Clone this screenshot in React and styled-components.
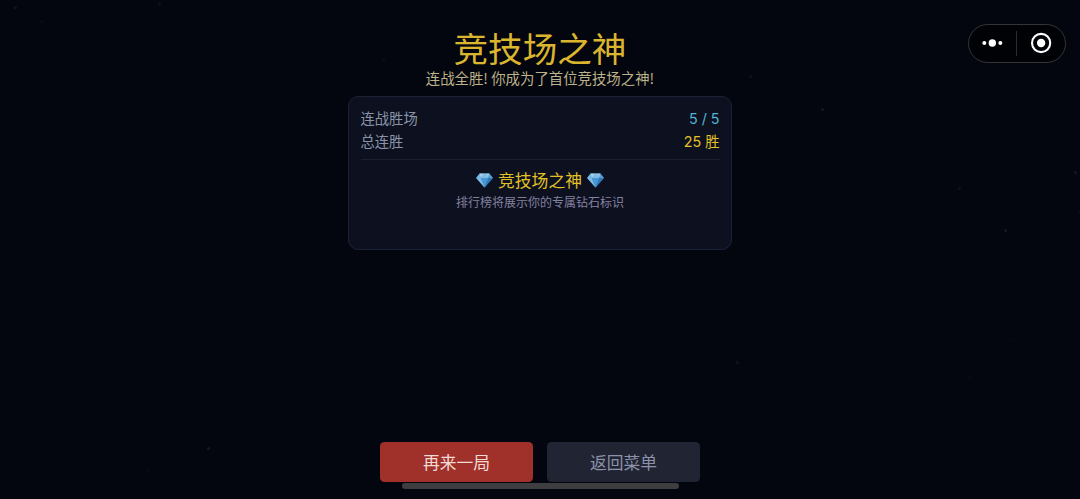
import styled, { createGlobalStyle } from "styled-components";

const GlobalStyle = createGlobalStyle`
  body {
    margin: 0;
    background-color: #03060e;
  }
  * {
    box-sizing: border-box;
  }
`;

const Container = styled.div`
  position: relative;
  width: 100vw;
  height: 499px;
  overflow: hidden;

  display: flex;
  flex-direction: column;
  align-items: center;

  background-color: #03060e;
  font-family: "Noto Sans CJK SC", sans-serif;
`;

const Star = styled.i`
  position: absolute;
  left: ${(props) => props.$x}px;
  top: ${(props) => props.$y}px;
  width: 3px;
  height: 3px;
  border-radius: 50%;
  background-color: #ffffff;
  opacity: ${(props) => props.$opacity};
`;

const Title = styled.h1`
  margin: 27px 0 0;
  height: 41px;
  line-height: 41px;

  font-size: 34.6px;
  font-weight: 400;
  color: #dcb52f;
`;

const Subtitle = styled.div`
  height: 20px;
  line-height: 20px;

  font-size: 14.4px;
  color: #bdb28a;
  white-space: nowrap;
`;

const Card = styled.div`
  width: 384px;
  height: 154px;
  margin-top: 8px;
  padding: 9px 11.5px;

  border: 1px solid #1b2137;
  border-radius: 10px;
  background-color: #0d101e;
`;

const Row = styled.div`
  height: 23px;

  display: flex;
  justify-content: space-between;
  align-items: center;

  font-size: 14.3px;
  line-height: 23px;
`;

const Label = styled.span`
  color: #8a94a9;
`;

const Value = styled.span`
  padding-top: 2px;
  color: ${(props) => props.$color};
  font-family: Inter, "Noto Sans CJK SC", sans-serif;
`;

const Divider = styled.div`
  height: 1px;
  margin-top: 7px;
  background-color: #1a2133;
`;

const Reward = styled.div`
  height: 24px;
  margin-top: 8px;

  display: flex;
  justify-content: center;
  align-items: center;
  gap: 5px;

  font-size: 16.8px;
  line-height: 24px;
  color: #e3c229;
`;

const RewardNote = styled.div`
  height: 18px;
  margin-top: 1px;

  font-size: 12px;
  line-height: 18px;
  text-align: center;
  color: #8480a0;
`;

const ButtonGroup = styled.div`
  display: flex;
  gap: 14px;
  margin-top: auto;
`;

const Button = styled.button`
  width: 153px;
  height: 40px;
  padding: 0;

  border: none;
  border-radius: 4.5px;
  background-color: ${(props) => (props.$primary ? "#9f302a" : "#212433")};

  color: ${(props) => (props.$primary ? "#f3dad5" : "#8c92aa")};
  font-family: inherit;
  font-size: 16.8px;
  line-height: 40px;

  cursor: pointer;
`;

const HomeBar = styled.div`
  flex: none;
  width: 277px;
  height: 6px;
  margin: 1px 0 10px;
  border-radius: 3px;
  background-color: #3e3e41;
`;

// mini program menu, floats over the page
const Capsule = styled.div`
  position: absolute;
  top: 24px;
  right: 14.5px;
  width: 97.5px;
  height: 38.5px;

  display: flex;
  align-items: center;

  border: 1px solid #343537;
  border-radius: 20px;
  background-color: #010205;

  svg {
    flex: 1;
    height: 24px;
  }
`;

const CapsuleLine = styled.div`
  width: 1px;
  height: 25px;
  background-color: #2b2c2f;
`;

const stars = [
  { x: 14, y: 6, opacity: 0.06 },
  { x: 40, y: 20, opacity: 0.03 },
  { x: 158, y: 2, opacity: 0.05 },
  { x: 382, y: 58, opacity: 0.04 },
  { x: 749, y: 75, opacity: 0.05 },
  { x: 821, y: 108, opacity: 0.07 },
  { x: 958, y: 187, opacity: 0.05 },
  { x: 1004, y: 229, opacity: 0.07 },
  { x: 1074, y: 171, opacity: 0.07 },
  { x: 1078, y: 211, opacity: 0.03 },
  { x: 736, y: 361, opacity: 0.06 },
  { x: 1012, y: 338, opacity: 0.02 },
  { x: 968, y: 376, opacity: 0.02 },
  { x: 207, y: 447, opacity: 0.07 },
  { x: 147, y: 469, opacity: 0.03 },
];

const Diamond = () => (
  <svg width="17" height="15" viewBox="0 0 17 15">
    <path d="M3.6 0.5h9.8L16.8 5 8.5 14.6 0.2 5z" fill="#4a9bd6" />
    <path d="M3.6 0.5L0.2 5h4.6z" fill="#72b7e2" />
    <path d="M3.6 0.5h4.9L4.8 5z" fill="#a9d0e8" />
    <path d="M8.5 0.5L4.8 5h7.4z" fill="#82bce2" />
    <path d="M8.5 0.5h4.9L12.2 5z" fill="#98c5e2" />
    <path d="M13.4 0.5L16.8 5h-4.6z" fill="#559fd2" />
    <path d="M0.2 5h4.6l3.7 9.6z" fill="#7fbae2" />
    <path d="M4.8 5h7.4L8.5 14.6z" fill="#4797d6" />
    <path d="M12.2 5h4.6L8.5 14.6z" fill="#2f78b6" />
  </svg>
);

const App = () => {
  return (
    <>
      <GlobalStyle />
      <Container>
        {stars.map((star) => (
          <Star key={`${star.x}-${star.y}`} $x={star.x} $y={star.y} $opacity={star.opacity} />
        ))}
        <Title>竞技场之神</Title>
        <Subtitle>连战全胜! 你成为了首位竞技场之神!</Subtitle>
        <Card>
          <Row>
            <Label>连战胜场</Label>
            <Value $color="#50b4d6">5 / 5</Value>
          </Row>
          <Row>
            <Label>总连胜</Label>
            <Value $color="#e3c229">25 胜</Value>
          </Row>
          <Divider />
          <Reward>
            <Diamond />
            <span>竞技场之神</span>
            <Diamond />
          </Reward>
          <RewardNote>排行榜将展示你的专属钻石标识</RewardNote>
        </Card>
        <ButtonGroup>
          <Button $primary>再来一局</Button>
          <Button>返回菜单</Button>
        </ButtonGroup>
        <HomeBar />
        <Capsule>
          <svg viewBox="0 0 47 24">
            <circle cx="15.2" cy="12" r="2" fill="#fff" />
            <circle cx="23.2" cy="12" r="3.7" fill="#fff" />
            <circle cx="31.2" cy="12" r="2" fill="#fff" />
          </svg>
          <CapsuleLine />
          <svg viewBox="0 0 47 24">
            <circle cx="24" cy="12" r="9.1" fill="none" stroke="#fff" strokeWidth="2.1" />
            <circle cx="24" cy="12" r="4.2" fill="#fff" />
          </svg>
        </Capsule>
      </Container>
    </>
  );
};

export default App;
